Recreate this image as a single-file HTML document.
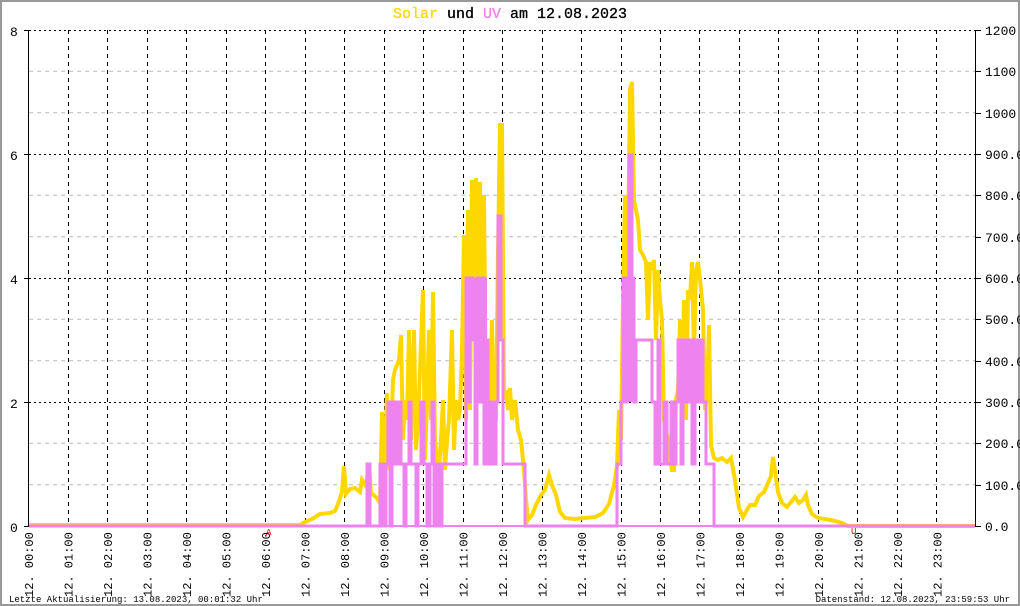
<!DOCTYPE html>
<html><head><meta charset="utf-8"><style>
html,body{margin:0;padding:0;background:#fff}
svg{display:block}
text{font-family:"Liberation Mono","DejaVu Sans Mono",monospace}
</style></head><body>
<svg width="1020" height="606" viewBox="0 0 1020 606" xmlns="http://www.w3.org/2000/svg">
<rect x="1" y="1" width="1018" height="604" fill="#fff" stroke="#999" stroke-width="2"/>
<text x="510" y="18" font-size="15" text-anchor="middle" stroke="#000" stroke-width="0.3"><tspan fill="#ffd700" stroke="#ffd700">Solar</tspan> und <tspan fill="#ee82ee" stroke="#ee82ee">UV</tspan> am 12.08.2023</text>
<g stroke="#bbb" stroke-width="1" stroke-dasharray="4,4">
<line x1="29" y1="71.3" x2="976" y2="71.3"/><line x1="29" y1="112.7" x2="976" y2="112.7"/>
<line x1="29" y1="195.3" x2="976" y2="195.3"/><line x1="29" y1="236.7" x2="976" y2="236.7"/>
<line x1="29" y1="319.3" x2="976" y2="319.3"/><line x1="29" y1="360.7" x2="976" y2="360.7"/>
<line x1="29" y1="443.3" x2="976" y2="443.3"/><line x1="29" y1="484.7" x2="976" y2="484.7"/>
</g>
<g stroke="#000" stroke-width="1" stroke-dasharray="2,3">
<line x1="29" y1="30.5" x2="976" y2="30.5"/><line x1="29" y1="154.5" x2="976" y2="154.5"/>
<line x1="29" y1="278.5" x2="976" y2="278.5"/><line x1="29" y1="402.5" x2="976" y2="402.5"/>
</g>
<g stroke="#000" stroke-width="1" stroke-dasharray="4,4">
<line x1="68.5" y1="30" x2="68.5" y2="526"/><line x1="107.5" y1="30" x2="107.5" y2="526"/>
<line x1="147.5" y1="30" x2="147.5" y2="526"/><line x1="186.5" y1="30" x2="186.5" y2="526"/>
<line x1="226.5" y1="30" x2="226.5" y2="526"/><line x1="265.5" y1="30" x2="265.5" y2="526"/>
<line x1="305.5" y1="30" x2="305.5" y2="526"/><line x1="344.5" y1="30" x2="344.5" y2="526"/>
<line x1="384.5" y1="30" x2="384.5" y2="526"/><line x1="423.5" y1="30" x2="423.5" y2="526"/>
<line x1="463.5" y1="30" x2="463.5" y2="526"/><line x1="502.5" y1="30" x2="502.5" y2="526"/>
<line x1="542.5" y1="30" x2="542.5" y2="526"/><line x1="581.5" y1="30" x2="581.5" y2="526"/>
<line x1="621.5" y1="30" x2="621.5" y2="526"/><line x1="660.5" y1="30" x2="660.5" y2="526"/>
<line x1="699.5" y1="30" x2="699.5" y2="526"/><line x1="739.5" y1="30" x2="739.5" y2="526"/>
<line x1="778.5" y1="30" x2="778.5" y2="526"/><line x1="818.5" y1="30" x2="818.5" y2="526"/>
<line x1="857.5" y1="30" x2="857.5" y2="526"/><line x1="897.5" y1="30" x2="897.5" y2="526"/>
<line x1="936.5" y1="30" x2="936.5" y2="526"/>
</g>
<line x1="28.5" y1="30" x2="28.5" y2="527" stroke="#000"/>
<line x1="975.5" y1="30" x2="975.5" y2="527" stroke="#000"/>
<line x1="28" y1="526.5" x2="976" y2="526.5" stroke="#000"/>
<g stroke="#000"><line x1="24" y1="30.5" x2="29" y2="30.5"/><line x1="24" y1="154.5" x2="29" y2="154.5"/><line x1="24" y1="278.5" x2="29" y2="278.5"/><line x1="24" y1="402.5" x2="29" y2="402.5"/><line x1="24" y1="526.5" x2="29" y2="526.5"/></g>
<g font-size="13" fill="#000">
<text x="10" y="36">8</text><text x="10" y="160">6</text><text x="10" y="284">4</text><text x="10" y="408">2</text><text x="10" y="532">0</text>
</g>
<g stroke="#000">
<line x1="975" y1="30.5" x2="981" y2="30.5"/><line x1="975" y1="71.5" x2="981" y2="71.5"/><line x1="975" y1="113.5" x2="981" y2="113.5"/><line x1="975" y1="154.5" x2="981" y2="154.5"/><line x1="975" y1="195.5" x2="981" y2="195.5"/><line x1="975" y1="237.5" x2="981" y2="237.5"/><line x1="975" y1="278.5" x2="981" y2="278.5"/><line x1="975" y1="319.5" x2="981" y2="319.5"/><line x1="975" y1="361.5" x2="981" y2="361.5"/><line x1="975" y1="402.5" x2="981" y2="402.5"/><line x1="975" y1="443.5" x2="981" y2="443.5"/><line x1="975" y1="485.5" x2="981" y2="485.5"/><line x1="975" y1="526.5" x2="981" y2="526.5"/>
</g>
<g font-size="13" fill="#000">
<text x="985" y="35">1200</text><text x="985" y="76">1100</text><text x="985" y="118">1000</text><text x="985" y="159">900.0</text><text x="985" y="200">800.0</text><text x="985" y="242">700.0</text><text x="985" y="283">600.0</text><text x="985" y="324">500.0</text><text x="985" y="366">400.0</text><text x="985" y="407">300.0</text><text x="985" y="448">200.0</text><text x="985" y="490">100.0</text><text x="985" y="531">0.0</text>
</g>
<polyline fill="none" stroke="#ffd700" stroke-width="4" stroke-linejoin="miter" points="29,525 300,525 305,522 312,519 320,514 330,513 335,511 338,504 342,492 344,466 346,494 350,489 355,488 360,492 362,480 366,486 369,463 371,493 376,497 380,503 382,412 384,480 387,393 389,470 391,440 393,380 395,370 397,365 399,360 401,335 403,440 405,400 407,420 409,330 411,440 414,330 416,450 418,420 420,370 423,290 425,460 427,400 429,330 431,420 433,292 435,440 437,460 439,470 441,440 443,400 445,470 447,440 449,420 452,330 454,450 456,400 458,420 460,410 462,350 464,235 466,420 468,210 470,410 472,180 474,330 476,178 478,400 480,182 482,300 484,195 486,420 488,360 490,440 492,320 494,430 496,420 498,250 500,125 502,125 504,400 506,390 508,410 510,388 512,420 515,400 518,430 521,440 524,470 526,500 528,520 532,515 536,505 541,495 545,490 549,475 552,485 556,495 560,512 565,518 575,519 595,517 603,513 609,504 614,485 617,466 619,410 621,440 623,300 625,195 627,300 629,170 630,90 632,82 634,200 636,210 638,220 640,250 643,255 646,262 648,320 650,262 652,270 654,260 656,340 658,270 660,300 662,320 664,420 666,430 668,440 670,460 672,470 674,470 676,400 678,390 680,320 682,400 684,300 686,420 688,290 690,300 692,262 694,350 696,270 698,262 700,280 703,310 705,410 707,395 709,325 711,445 714,458 718,460 722,458 727,462 731,458 735,480 739,508 743,517 747,510 750,505 755,505 759,496 764,492 768,483 771,476 773,457 775,470 778,492 782,503 787,507 791,502 795,497 799,503 803,500 806,495 808,505 812,514 818,518 825,519 835,521 842,523 848,526 975,526"/>
<polyline fill="none" stroke="#ee82ee" stroke-width="3" stroke-linejoin="miter" points="29,526 367,526 367,464 370,464 370,526 380,526 380,464 383,464 383,526 386,526 386,464 388,464 388,402 390,402 390,526 392,526 392,402 395,402 395,464 398,464 398,402 401,402 401,464 404,464 404,526 406,526 406,464 409,464 409,402 411,402 411,464 416,464 416,526 418,526 418,464 421,464 421,402 424,402 424,464 427,464 427,526 430,526 430,464 432,464 432,402 434,402 434,526 437,526 437,464 440,464 440,526 442,526 442,464 446,464 466,464 466,278 468,278 468,402 470,402 470,278 473,278 473,340 475,340 475,464 477,464 477,278 479,278 479,402 481,402 481,278 484,278 484,464 486,464 486,340 488,340 488,464 491,464 491,402 493,402 493,464 496,464 496,402 498,402 498,216 501,216 501,340 503,340 503,464 525,464 525,526 617,526 617,464 621,464 621,402 623,402 623,278 625,278 625,402 627,402 627,278 629,278 629,155 632,155 632,278 634,278 634,402 636,402 636,340 640,340 640,340 652,340 652,402 655,402 655,464 658,464 658,340 660,340 660,464 664,464 664,402 667,402 667,464 671,464 671,402 673,402 673,464 676,464 676,402 678,402 678,340 681,340 681,464 683,464 683,340 686,340 686,402 689,402 689,340 692,340 692,464 695,464 695,340 698,340 698,402 700,402 700,340 703,340 703,402 706,402 706,464 714,464 714,526 975,526"/>
<rect x="465" y="278" width="22" height="62" fill="#ee82ee"/>
<rect x="623" y="278" width="11" height="124" fill="#ee82ee"/>
<line x1="29" y1="526" x2="975" y2="526" stroke="#ee82ee" stroke-width="2"/>
<text x="266" y="535" font-size="9" fill="#e00">A</text>
<text x="851" y="534" font-size="9" fill="#e00">U</text>
<g font-size="12" fill="#000">
<text transform="translate(33,597) rotate(-90)">12. 00:00</text>
<text transform="translate(72.5,597) rotate(-90)">12. 01:00</text>
<text transform="translate(112,597) rotate(-90)">12. 02:00</text>
<text transform="translate(151.5,597) rotate(-90)">12. 03:00</text>
<text transform="translate(191,597) rotate(-90)">12. 04:00</text>
<text transform="translate(230.5,597) rotate(-90)">12. 05:00</text>
<text transform="translate(270,597) rotate(-90)">12. 06:00</text>
<text transform="translate(309.5,597) rotate(-90)">12. 07:00</text>
<text transform="translate(349,597) rotate(-90)">12. 08:00</text>
<text transform="translate(388.5,597) rotate(-90)">12. 09:00</text>
<text transform="translate(428,597) rotate(-90)">12. 10:00</text>
<text transform="translate(467.5,597) rotate(-90)">12. 11:00</text>
<text transform="translate(507,597) rotate(-90)">12. 12:00</text>
<text transform="translate(546.5,597) rotate(-90)">12. 13:00</text>
<text transform="translate(586,597) rotate(-90)">12. 14:00</text>
<text transform="translate(625.5,597) rotate(-90)">12. 15:00</text>
<text transform="translate(665,597) rotate(-90)">12. 16:00</text>
<text transform="translate(704.5,597) rotate(-90)">12. 17:00</text>
<text transform="translate(744,597) rotate(-90)">12. 18:00</text>
<text transform="translate(783.5,597) rotate(-90)">12. 19:00</text>
<text transform="translate(823,597) rotate(-90)">12. 20:00</text>
<text transform="translate(862.5,597) rotate(-90)">12. 21:00</text>
<text transform="translate(902,597) rotate(-90)">12. 22:00</text>
<text transform="translate(941.5,597) rotate(-90)">12. 23:00</text>
</g>
<text x="9" y="602" font-size="9" fill="#000">Letzte Aktualisierung: 13.08.2023, 00:01:32 Uhr</text>
<text x="1010" y="602" font-size="9" fill="#000" text-anchor="end">Datenstand: 12.08.2023, 23:59:53 Uhr</text>
</svg>
</body></html>
